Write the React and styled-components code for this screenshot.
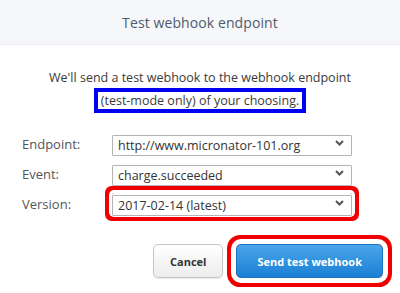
import React from 'react'
import styled, { createGlobalStyle } from 'styled-components'

const GlobalStyle = createGlobalStyle`
  html, body {
    margin: 0;
    padding: 0;
    background: #fff;
  }
  body {
    font-family: "Open Sans", "Noto Sans", "Liberation Sans", sans-serif;
    color: #333;
  }
`

const Dialog = styled.div`
  width: 400px;
  height: 293px;
  background: #fff;
  overflow: hidden;
`

const Header = styled.div`
  height: 45px;
  display: flex;
  align-items: center;
  justify-content: center;
  background: #f5f7fa;
  border-bottom: 1px solid #e9edf2;
  box-sizing: border-box;
`

const Title = styled.h1`
  margin: 0;
  font-size: 14px;
  font-weight: 400;
  color: #4f5b6e;
  letter-spacing: 0.1px;
`

const Intro = styled.div`
  margin-top: 24px;
  display: flex;
  flex-direction: column;
  align-items: center;
  font-size: 12.5px;
  line-height: 18px;
  color: #3a3a3a;
`

const Marked = styled.span`
  line-height: 17px;
  padding: 0 3px;
  border: 4px solid #0000f0;
  margin-top: 1px;
`

const Form = styled.div`
  margin-top: 20px;
  display: flex;
  flex-direction: column;
  gap: 9px;
`

const Row = styled.div`
  display: flex;
  align-items: center;
  padding-left: 22px;
  height: 21px;
`

const Label = styled.label`
  width: 90px;
  font-size: 13px;
  color: #555;
`

const SelectWrap = styled.div`
  position: relative;
  width: 240px;
  height: 21px;
  box-shadow: ${p => p.highlight ? '0 0 0 3px #fff, 0 0 0 7px #f00000' : 'none'};
  border-radius: ${p => p.highlight ? '2px' : '1px'};
`

const Select = styled.select`
  appearance: none;
  width: 100%;
  height: 100%;
  box-sizing: border-box;
  border: 1px solid #b4b4b4;
  border-radius: 1px;
  background: #fff;
  padding: 0 22px 0 5px;
  font-family: inherit;
  font-size: 12.5px;
  color: #333;
  outline: none;
`

const Chevron = styled.svg`
  position: absolute;
  right: 8px;
  top: 7px;
  pointer-events: none;
`

const Actions = styled.div`
  margin-top: 30px;
  display: flex;
  justify-content: flex-end;
  gap: 13px;
  padding-right: 17px;
`

const Button = styled.button`
  height: 34px;
  padding: 0 ${p => p.primary ? '20px' : '16px'};
  border-radius: 5px;
  font-family: inherit;
  font-size: 11px;
  font-weight: 700;
  cursor: pointer;
  border: 1px solid ${p => p.primary ? '#1a74c2' : '#c6c6c6'};
  color: ${p => p.primary ? '#fff' : '#333'};
  background: ${p => p.primary
    ? 'linear-gradient(#4aa6ea, #1b7fd4)'
    : 'linear-gradient(#ffffff, #ededed)'};
  box-shadow: ${p => p.highlight
    ? '0 0 0 5px #fff, 0 0 0 9px #f00000'
    : '0 1px 1px rgba(0,0,0,0.08)'};
`

const ChevronIcon = () => (
  <Chevron width="9" height="6" viewBox="0 0 9 6">
    <path d="M1 1l3.5 3.5L8 1" fill="none" stroke="#555" strokeWidth="2" />
  </Chevron>
)

const Field = ({ label, value, highlight }) => (
  <Row>
    <Label>{label}</Label>
    <SelectWrap highlight={highlight}>
      <Select defaultValue={value}>
        <option>{value}</option>
      </Select>
      <ChevronIcon />
    </SelectWrap>
  </Row>
)

export default function App() {
  return (
    <Dialog>
      <GlobalStyle />
      <Header>
        <Title>Test webhook endpoint</Title>
      </Header>
      <Intro>
        <span>We'll send a test webhook to the webhook endpoint</span>
        <Marked>(test-mode only) of your choosing.</Marked>
      </Intro>
      <Form>
        <Field label="Endpoint:" value="http://www.micronator-101.org" />
        <Field label="Event:" value="charge.succeeded" />
        <Field label="Version:" value="2017-02-14 (latest)" highlight />
      </Form>
      <Actions>
        <Button>Cancel</Button>
        <Button primary highlight>Send test webhook</Button>
      </Actions>
    </Dialog>
  )
}
